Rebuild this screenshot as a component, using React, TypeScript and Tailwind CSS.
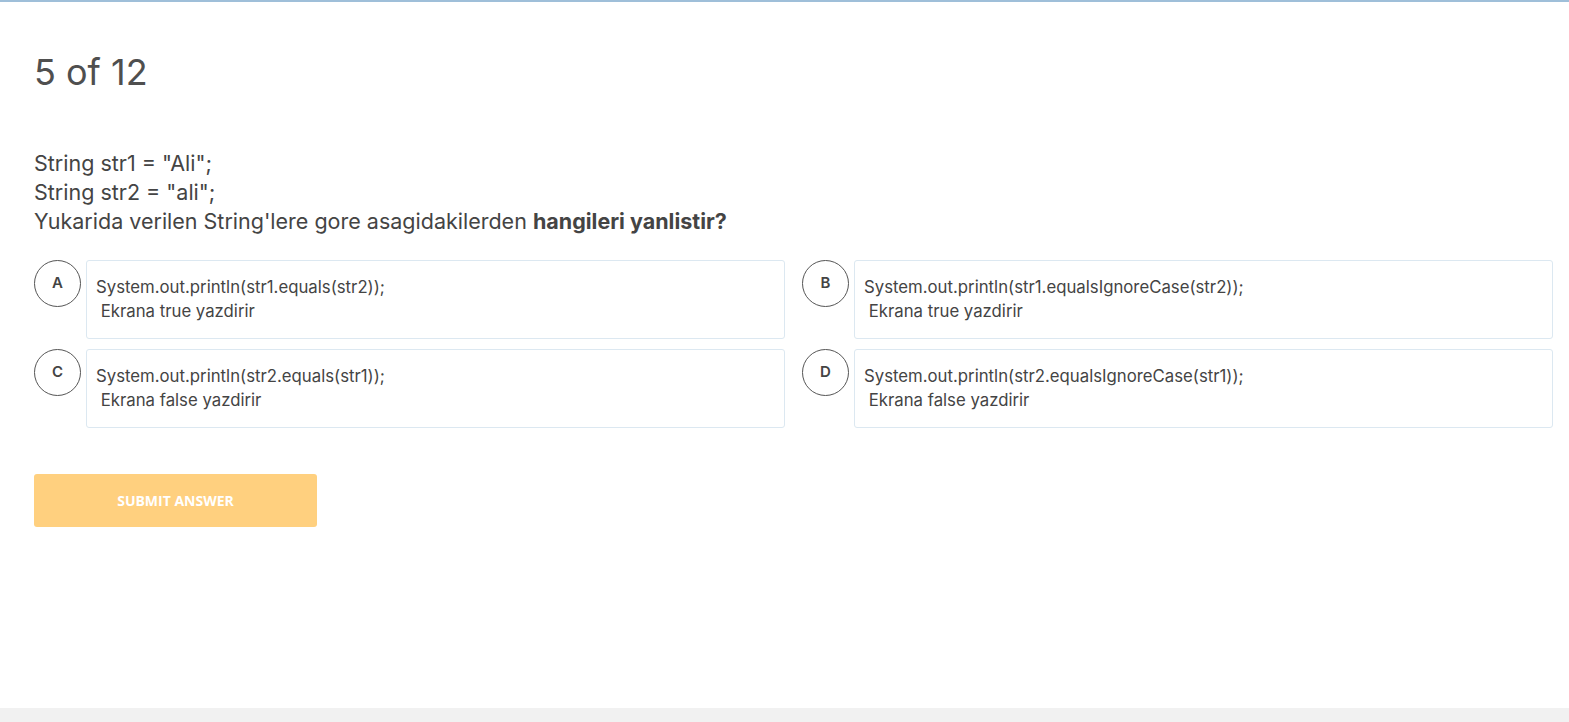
import React from "react"

type Option = {
  label: string
  code: string
  note: string
}

const options: Option[] = [
  { label: 'A', code: 'System.out.println(str1.equals(str2));', note: 'Ekrana true yazdirir' },
  { label: 'B', code: 'System.out.println(str1.equalsIgnoreCase(str2));', note: 'Ekrana true yazdirir' },
  { label: 'C', code: 'System.out.println(str2.equals(str1));', note: 'Ekrana false yazdirir' },
  { label: 'D', code: 'System.out.println(str2.equalsIgnoreCase(str1));', note: 'Ekrana false yazdirir' },
]

function OptionItem(props: Option) {
  return (
    <div className="flex items-start gap-[5px]">
      <div className="w-[47px] h-[47px] shrink-0 rounded-full border border-[#555] flex items-center justify-center text-[15px] font-semibold text-[#444] font-['Inter',sans-serif] pb-[1px]">
        {props.label}
      </div>
      <div className="flex-1 h-[79px] rounded-[3px] border border-[#dce8f1] px-[9px] pt-[14px] font-['Inter',sans-serif] text-[16.75px] leading-[24px] text-[#444]">
        <p>{props.code}</p>
        <p>&nbsp;{props.note}</p>
      </div>
    </div>
  )
}

export default function App() {
  return (
    <div className="w-full h-[722px] flex flex-col bg-white border-t-2 border-[#9fbfd9]">
      <div className="flex-1 pl-[34px] pr-[16px]">
        <h1 className="mt-[47px] font-['Inter',sans-serif] text-[36px] leading-[46px] font-normal text-[#4f4f4f]">5 of 12</h1>
        <div className="mt-[54px] font-['Inter',sans-serif] text-[21.5px] leading-[29px] text-[#444]">
          <p>String str1 = "Ali";</p>
          <p>String str2 = "ali";</p>
          <p>Yukarida verilen String'lere gore asagidakilerden <b className="font-bold">hangileri yanlistir?</b></p>
        </div>
        <div className="mt-[24px] grid grid-cols-2 gap-x-[17px] gap-y-[10px]">
          {options.map(o => (
            <OptionItem key={o.label} {...o} />
          ))}
        </div>
        <button className="mt-[46px] w-[283px] h-[53px] rounded-[3px] bg-[#ffd07f] text-white font-['Open_Sans',sans-serif] font-bold text-[14px] uppercase">
          Submit Answer
        </button>
      </div>
      <div className="h-[14px] bg-[#f1f1f1]" />
    </div>
  )
}
